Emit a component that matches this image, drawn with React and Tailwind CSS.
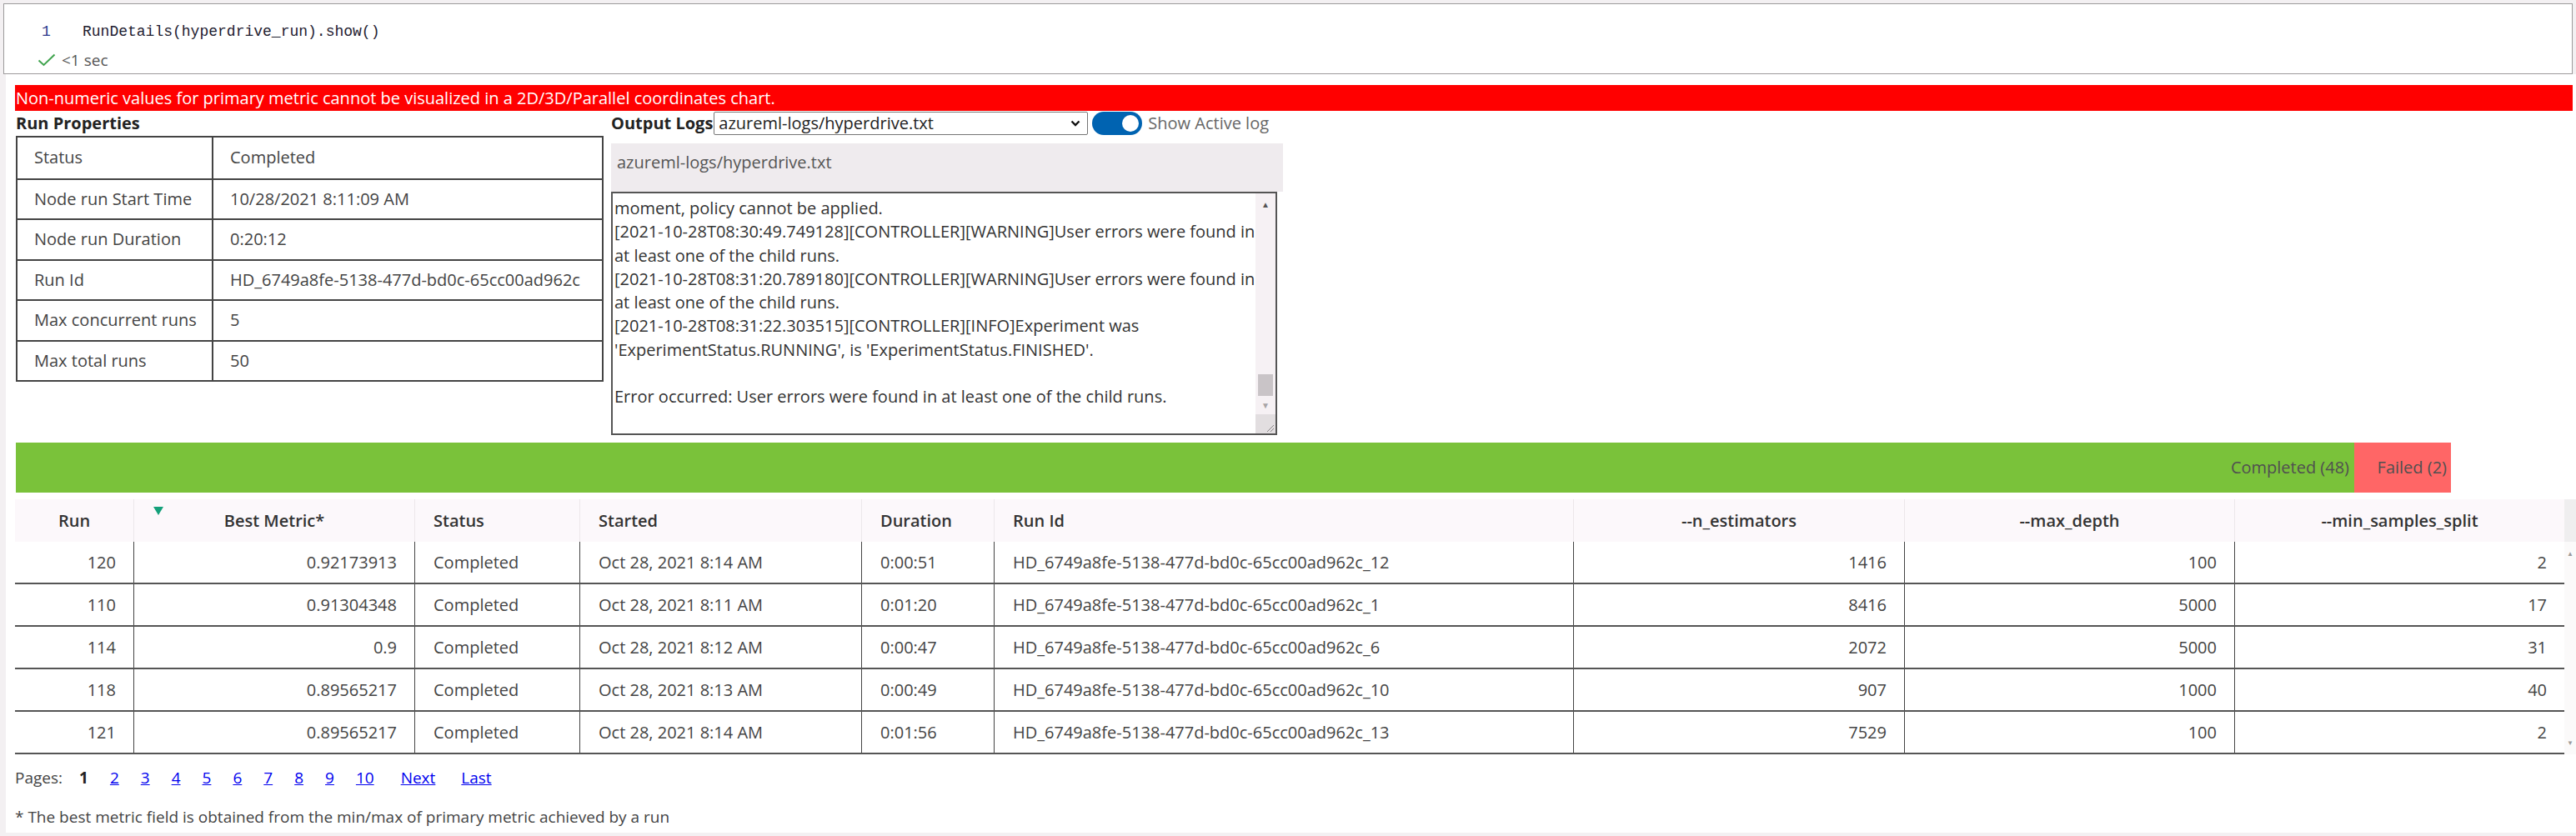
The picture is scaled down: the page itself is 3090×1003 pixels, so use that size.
import React from "react";

const props = [
  ["Status", "Completed"],
  ["Node run Start Time", "10/28/2021 8:11:09 AM"],
  ["Node run Duration", "0:20:12"],
  ["Run Id", "HD_6749a8fe-5138-477d-bd0c-65cc00ad962c"],
  ["Max concurrent runs", "5"],
  ["Max total runs", "50"],
];

const logLines = [
  "moment, policy cannot be applied.",
  "[2021-10-28T08:30:49.749128][CONTROLLER][WARNING]User errors were found in",
  "at least one of the child runs.",
  "[2021-10-28T08:31:20.789180][CONTROLLER][WARNING]User errors were found in",
  "at least one of the child runs.",
  "[2021-10-28T08:31:22.303515][CONTROLLER][INFO]Experiment was",
  "'ExperimentStatus.RUNNING', is 'ExperimentStatus.FINISHED'.",
  "\u00a0",
  "Error occurred: User errors were found in at least one of the child runs.",
];

const runs = [
  ["120", "0.92173913", "Completed", "Oct 28, 2021 8:14 AM", "0:00:51", "HD_6749a8fe-5138-477d-bd0c-65cc00ad962c_12", "1416", "100", "2"],
  ["110", "0.91304348", "Completed", "Oct 28, 2021 8:11 AM", "0:01:20", "HD_6749a8fe-5138-477d-bd0c-65cc00ad962c_1", "8416", "5000", "17"],
  ["114", "0.9", "Completed", "Oct 28, 2021 8:12 AM", "0:00:47", "HD_6749a8fe-5138-477d-bd0c-65cc00ad962c_6", "2072", "5000", "31"],
  ["118", "0.89565217", "Completed", "Oct 28, 2021 8:13 AM", "0:00:49", "HD_6749a8fe-5138-477d-bd0c-65cc00ad962c_10", "907", "1000", "40"],
  ["121", "0.89565217", "Completed", "Oct 28, 2021 8:14 AM", "0:01:56", "HD_6749a8fe-5138-477d-bd0c-65cc00ad962c_13", "7529", "100", "2"],
];

// right aligned columns in the runs table
const numCol = [true, true, false, false, false, false, true, true, true];

const gridCols =
  "grid grid-cols-[142px_337px_198px_338px_159px_695px_397px_396px_396px]";

const App = () => {
  return (
    <div className="w-[3090px] h-[1003px] overflow-hidden bg-[#f3f0f2] font-['Open_Sans',sans-serif] text-[20px] text-[#444]">
      {/* code cell */}
      <div className="ml-[4px] mr-[4px] mt-[4px] h-[85px] border border-[#9c9a9b] bg-white">
        <div className="flex pl-[45px] mt-[22px] h-[22px] items-center font-['Liberation_Mono',monospace] text-[18px]">
          <span className="w-[49px] text-[#2b3a8c]">1</span>
          <span className="text-[#1e2030]">RunDetails(hyperdrive_run).show()</span>
        </div>
        <div className="flex pl-[40px] mt-[12px] h-[22px] items-center">
          <svg width="22" height="16" viewBox="0 0 22 16" fill="none">
            <path d="M1.5 8.5 L7.5 14 L20.5 1.5" stroke="#3fa34d" strokeWidth="2" />
          </svg>
          <span className="ml-[7px] text-[19px] text-[#555]">&lt;1 sec</span>
        </div>
      </div>

      {/* output area */}
      <div className="ml-[7px] h-[910px] bg-white pl-[11px] pt-[13px]">
        <div className="mr-[4px] h-[31px] bg-[#ff0000] pl-[1px] leading-[31px] text-white">
          Non-numeric values for primary metric cannot be visualized in a 2D/3D/Parallel coordinates chart.
        </div>

        <div className="flex">
          {/* run properties */}
          <div className="ml-[1px] w-[705px]">
            <div className="h-[30px] leading-[30px] font-bold text-[#222]">Run Properties</div>
            <div className="border-2 border-[#444]">
              {props.map(([k, v], i) => (
                <div
                  key={k}
                  className={`flex h-[48.5px] items-center ${i > 0 ? "border-t-2 border-[#444]" : ""}`}
                >
                  <div className="w-[233px] h-full flex items-center pl-[20px]">{k}</div>
                  <div className="flex-1 h-full flex items-center pl-[20px] border-l-2 border-[#444]">{v}</div>
                </div>
              ))}
            </div>
          </div>

          {/* output logs */}
          <div className="ml-[9px] w-[807px]">
            <div className="flex h-[30px] items-center">
              <span className="font-bold text-[#222]">Output Logs</span>
              <div className="ml-[1px] flex h-[28px] w-[449px] items-center justify-between border border-[#767676] rounded-[2px] pl-[5px] pr-[8px] text-[#222]">
                <span>azureml-logs/hyperdrive.txt</span>
                <svg width="12" height="8" viewBox="0 0 12 8" fill="none">
                  <path d="M1.5 1.5 L6 6 L10.5 1.5" stroke="#111" strokeWidth="2.4" />
                </svg>
              </div>
              <div className="relative ml-[5px] h-[28px] w-[60px] rounded-full bg-[#0063b1]">
                <div className="absolute right-[4px] top-[4px] h-[20px] w-[20px] rounded-full bg-white" />
              </div>
              <span className="ml-[7px] text-[#666]">Show Active log</span>
            </div>
            <div className="mt-[9px] h-[58px] w-[806px] bg-[#efebee] pl-[7px] pt-[9px] leading-[28px] text-[#555]">
              azureml-logs/hyperdrive.txt
            </div>
            <div className="flex h-[292px] w-[799px] border-2 border-[#555] bg-white">
              <div className="flex-1 overflow-hidden pl-[2px] pt-[4px]">
                <div className="leading-[28.3px] text-[#333] whitespace-nowrap">
                  {logLines.map((l, i) => (
                    <div key={i}>{l}</div>
                  ))}
                </div>
              </div>
              <div className="flex w-[24px] flex-col bg-[#f6f1f4]">
                <div className="flex h-[26px] items-center justify-center text-[10px] text-[#555]">▲</div>
                <div className="flex-1" />
                <div className="mx-[3px] h-[26px] bg-[#c9c4c7]" />
                <div className="flex h-[22px] items-center justify-center text-[10px] text-[#a8a4a6]">▼</div>
                <div className="relative h-[23px] bg-[#e2dee0]">
                  <svg className="absolute right-[1px] bottom-[1px]" width="12" height="12" viewBox="0 0 12 12">
                    <path d="M11 3 L3 11 M11 7 L7 11" stroke="#8a8688" strokeWidth="1" />
                  </svg>
                </div>
              </div>
            </div>
          </div>
        </div>

        {/* status bar */}
        <div className="ml-[1px] mt-[9px] flex h-[60px] text-[#505050]">
          <div className="flex w-[2805px] items-center justify-end bg-[#7ac23a] pr-[6px]">Completed (48)</div>
          <div className="flex w-[116px] items-center justify-end bg-[#ff6666] pr-[5px]">Failed (2)</div>
        </div>

        {/* runs table */}
        <div className="mt-[8px] flex">
          <div className="w-[3058px]">
            <div className={`${gridCols} h-[51px] bg-[#fcf8fb] font-semibold text-[#333]`}>
              <div className="flex items-center justify-center">Run</div>
              <div className="relative flex items-center justify-center border-l border-[#ece7ea]">
                <svg className="absolute left-[23px] top-[9px]" width="12" height="10" viewBox="0 0 12 10">
                  <path d="M0 0 H12 L6 10 Z" fill="#14a07a" />
                </svg>
                Best Metric*
              </div>
              <div className="flex items-center pl-[22px] border-l border-[#ece7ea]">Status</div>
              <div className="flex items-center pl-[22px] border-l border-[#ece7ea]">Started</div>
              <div className="flex items-center pl-[22px] border-l border-[#ece7ea]">Duration</div>
              <div className="flex items-center pl-[22px] border-l border-[#ece7ea]">Run Id</div>
              <div className="flex items-center justify-center border-l border-[#ece7ea]">--n_estimators</div>
              <div className="flex items-center justify-center border-l border-[#ece7ea]">--max_depth</div>
              <div className="flex items-center justify-center border-l border-[#ece7ea]">--min_samples_split</div>
            </div>
            {runs.map((r, ri) => (
              <div key={ri} className={`${gridCols} h-[51px] border-b-2 border-[#555]`}>
                {r.map((c, ci) => (
                  <div
                    key={ci}
                    className={`flex items-center ${numCol[ci] ? "justify-end pr-[21px]" : "pl-[22px]"} ${ci > 0 ? "border-l border-[#444]" : ""}`}
                  >
                    {c}
                  </div>
                ))}
              </div>
            ))}
          </div>
          <div className="flex w-[14px] flex-col bg-[#fbfafa]">
            <div className="h-[51px] bg-[#efeeef]" />
            <div className="mt-[8px] text-center text-[8px] leading-[12px] text-[#9a9a9a]">▲</div>
            <div className="flex-1" />
            <div className="mb-[8px] text-center text-[8px] leading-[12px] text-[#9a9a9a]">▼</div>
          </div>
        </div>

        {/* pagination */}
        <div className="mt-[13px] flex h-[30px] items-center text-[19px]">
          <span className="text-[#444]">Pages:</span>
          <span className="ml-[20px] font-bold text-[#222]">1</span>
          {["2", "3", "4", "5", "6", "7", "8", "9", "10"].map((p) => (
            <a key={p} href="#" className="ml-[26px] text-[#0000ee] underline">
              {p}
            </a>
          ))}
          <a href="#" className="ml-[32px] text-[#0000ee] underline">Next</a>
          <a href="#" className="ml-[31px] text-[#0000ee] underline">Last</a>
        </div>
        <div className="mt-[17px] h-[30px] leading-[30px] text-[19px] text-[#444]">
          * The best metric field is obtained from the min/max of primary metric achieved by a run
        </div>
      </div>
    </div>
  );
};

export default App;
